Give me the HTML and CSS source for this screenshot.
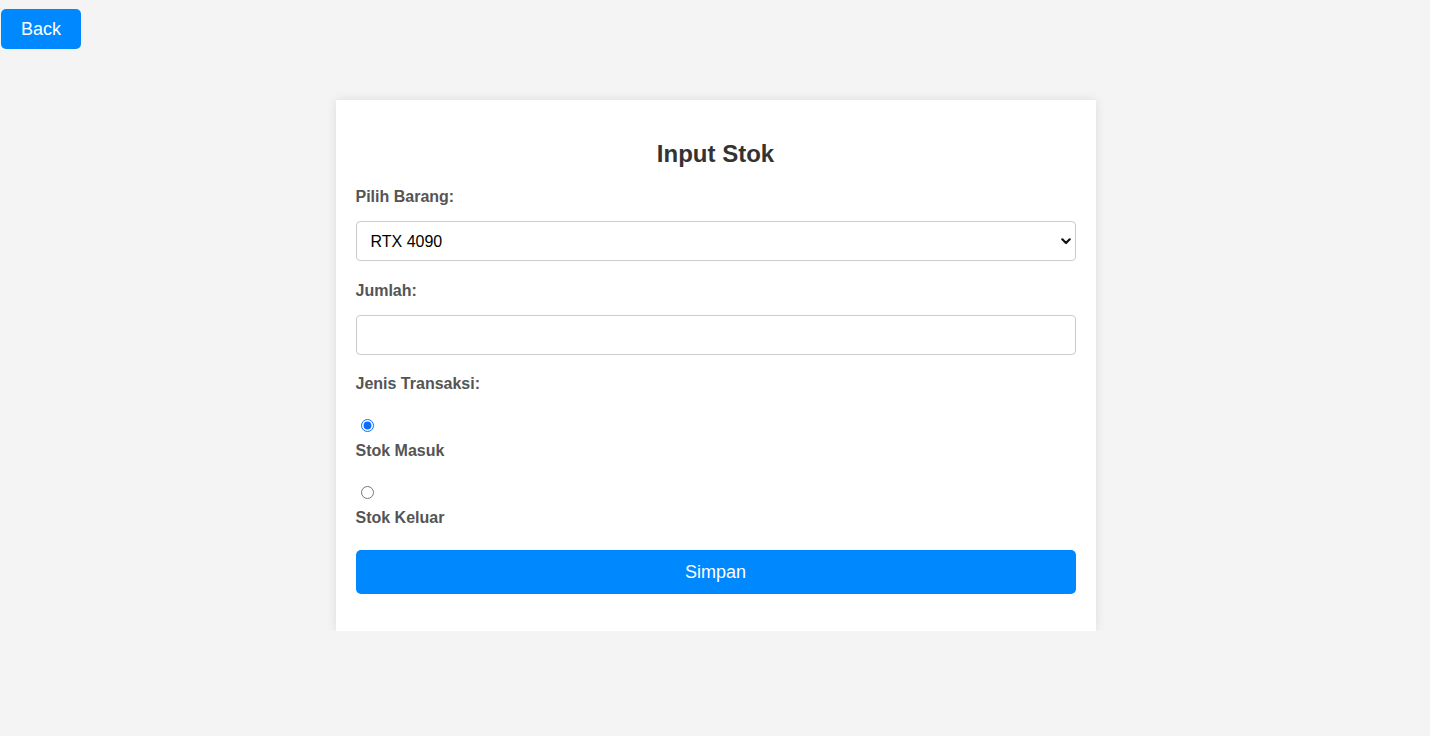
FILE: index.html
```html
<!DOCTYPE html>
<html lang="id">
<head>
<meta charset="utf-8">
<title>Input Stok</title>
<link rel="stylesheet" href="styles.css">
</head>
<body>
<div class="page">
  <div class="topbar">
    <button class="btn back-btn" type="button">Back</button>
  </div>
  <div class="card">
    <h2 class="title">Input Stok</h2>
    <form class="form">
      <label class="label" for="barang">Pilih Barang:</label>
      <div class="select-wrap">
        <select id="barang" class="field select">
          <option>RTX 4090</option>
        </select>
        <svg class="chevron" width="10" height="7" viewBox="0 0 10 7" aria-hidden="true">
          <path d="M1.3 1.3 L5 5 L8.7 1.3" fill="none" stroke="#111" stroke-width="2.2" stroke-linecap="round" stroke-linejoin="round"/>
        </svg>
      </div>
      <label class="label" for="jumlah">Jumlah:</label>
      <input id="jumlah" class="field input" type="number">
      <label class="label group-label">Jenis Transaksi:</label>
      <input id="masuk" class="radio" type="radio" name="jenis" checked>
      <label class="label radio-label" for="masuk">Stok Masuk</label>
      <input id="keluar" class="radio" type="radio" name="jenis">
      <label class="label radio-label" for="keluar">Stok Keluar</label>
      <button class="btn submit-btn" type="button">Simpan</button>
    </form>
  </div>
</div>
</body>
</html>
```
FILE: styles.css
```css
html, body {
  margin: 0;
  padding: 0;
  background: #f4f4f4;
  font-family: "Liberation Sans", Arial, Helvetica, sans-serif;
}

.page {
  padding-left: 1px;
}

.topbar {
  padding-top: 9px;
  display: flex;
}

.btn {
  background: #0088ff;
  color: #fff;
  border: none;
  border-radius: 5px;
  font-family: "Liberation Sans", Arial, Helvetica, sans-serif;
  font-size: 18px;
  cursor: pointer;
}

.back-btn {
  width: 80px;
  height: 40px;
  padding: 0;
}

.card {
  width: 760px;
  box-sizing: border-box;
  margin: 51px auto 0;
  background: #fff;
  padding: 20px;
  box-shadow: 0 0 10px rgba(0, 0, 0, 0.1);
}

.title {
  margin: 20px 0 19px;
  text-align: center;
  font-size: 24px;
  line-height: 28px;
  color: #333;
}

.form {
  display: flex;
  flex-direction: column;
  align-items: stretch;
}

.label {
  display: block;
  font-weight: bold;
  font-size: 16px;
  line-height: 20px;
  color: #555;
  margin-bottom: 14px;
}

.select-wrap {
  position: relative;
  margin-bottom: 20px;
}

.field {
  display: block;
  width: 100%;
  box-sizing: border-box;
  height: 40px;
  border: 1px solid #ccc;
  border-radius: 4px;
  background: #fff;
  font-family: "Liberation Sans", Arial, Helvetica, sans-serif;
  font-size: 16px;
  color: #000;
  padding: 0 14px;
  margin: 0;
}

.select {
  appearance: none;
  -webkit-appearance: none;
}

.chevron {
  position: absolute;
  right: 5px;
  top: 17px;
  pointer-events: none;
}

.input {
  margin-bottom: 19px;
}

.group-label {
  margin-bottom: 0;
}

.radio {
  display: block;
  width: 13px;
  height: 13px;
  margin: 25px 0 9px 5px;
  accent-color: #0a6cff;
  align-self: flex-start;
}

.radio-label {
  margin-bottom: 0;
}

.submit-btn {
  margin-top: 22px;
  margin-bottom: 17px;
  height: 44px;
  width: 100%;
}
```
